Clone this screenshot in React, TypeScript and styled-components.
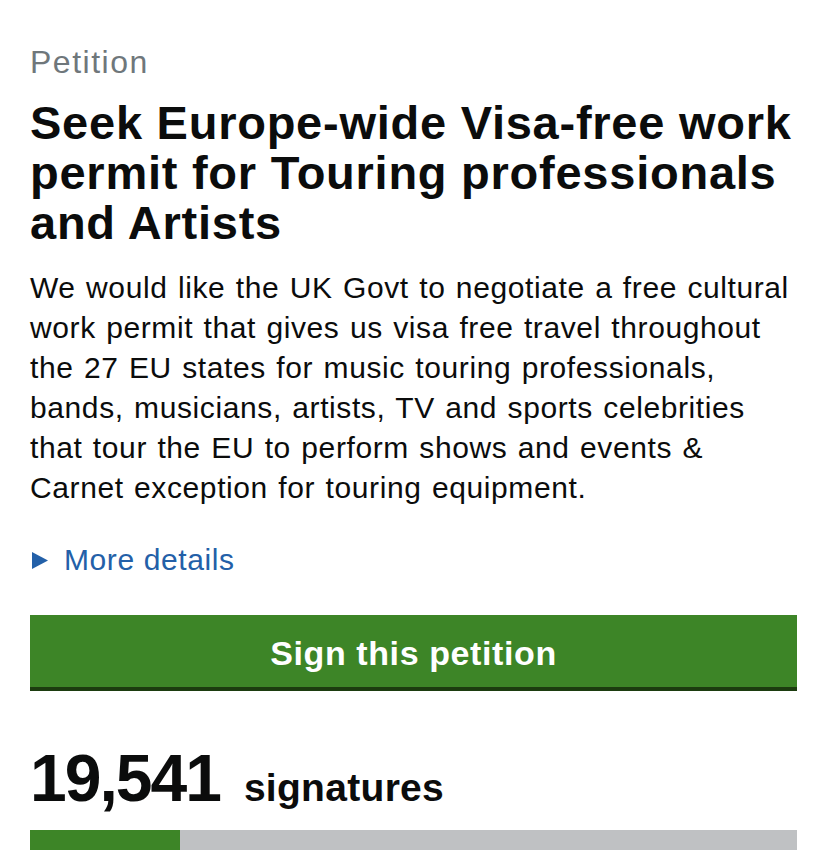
import React from "react";
import styled, { createGlobalStyle } from "styled-components";

const GlobalStyle = createGlobalStyle`
    html, body {
        margin: 0;
        padding: 0;
        background: #ffffff;
        overflow: hidden;
    }
    body {
        font-family: "Liberation Sans", Arial, Helvetica, sans-serif;
        color: #0b0c0c;
        -webkit-font-smoothing: antialiased;
    }
`;

const SIGNATURES = 19541;
const TARGET = 100000;

const App = () => {
    const percent = Math.min(100, (SIGNATURES / TARGET) * 100);

    return (
        <>
            <GlobalStyle />
            <Page>
                <Kicker>Petition</Kicker>
                <Title>Seek Europe-wide Visa-free work permit for Touring professionals and Artists</Title>
                <Summary>
                    We would like the UK Govt to negotiate a free cultural work permit that gives us visa free
                    travel throughout the 27 EU states for music touring professionals, bands, musicians,
                    artists, TV and sports celebrities that tour the EU to perform shows and events &amp; Carnet
                    exception for touring equipment.
                </Summary>
                <Details>
                    <Arrow viewBox="0 0 16 17" aria-hidden="true">
                        <polygon points="0,0 16,8.5 0,17" />
                    </Arrow>
                    More details
                </Details>
                <SignButton type="button">Sign this petition</SignButton>
                <Count>
                    <Number>{SIGNATURES.toLocaleString("en-GB")}</Number>
                    <Label>signatures</Label>
                </Count>
                <Progress>
                    <Fill style={{ width: `${percent}%` }} />
                </Progress>
            </Page>
        </>
    );
};

const Page = styled.main`
    padding: 45px 30px 0 30px;
    display: flex;
    flex-direction: column;

    & > * {
        flex-shrink: 0;
    }
`;

const Kicker = styled.span`
    font-size: 32px;
    line-height: 34px;
    letter-spacing: 1.5px;
    color: #6f777b;
`;

const Title = styled.h1`
    margin: 19px 0 0 0;
    font-size: 47px;
    line-height: 50px;
    font-weight: 700;
    letter-spacing: 0.75px;
`;

const Summary = styled.p`
    margin: 20px 0 0 0;
    font-size: 30px;
    line-height: 40px;
    letter-spacing: 0.6px;
    word-spacing: 1.5px;
`;

const Details = styled.a`
    margin-top: 32px;
    display: flex;
    align-items: center;
    gap: 16px;
    font-size: 30px;
    line-height: 40px;
    letter-spacing: 0.6px;
    color: #2360a8;
    cursor: pointer;
`;

const Arrow = styled.svg`
    width: 16px;
    height: 17px;
    margin-left: 2px;
    fill: #2360a8;
`;

const SignButton = styled.button`
    margin-top: 35px;
    height: 72px;
    padding: 4px 0 0 0;
    border: none;
    border-radius: 0;
    background: #3d8527;
    box-shadow: 0 4px 0 #1c3c0f;
    color: #ffffff;
    font-family: "Liberation Sans", Arial, sans-serif;
    font-size: 34px;
    font-weight: 700;
    letter-spacing: 0.6px;
    cursor: pointer;
`;

const Count = styled.div`
    margin-top: 60px;
    display: flex;
    align-items: baseline;
    gap: 24px;
    line-height: 62px;
    font-weight: 700;
`;

const Number = styled.span`
    font-size: 66px;
    letter-spacing: -2px;
`;

const Label = styled.span`
    font-size: 39px;
    letter-spacing: 0.3px;
`;

const Progress = styled.div`
    margin-top: 11px;
    height: 24px;
    background: #bfc1c3;
    display: flex;
`;

const Fill = styled.div`
    background: #3d8527;
    height: 100%;
`;

export default App;
